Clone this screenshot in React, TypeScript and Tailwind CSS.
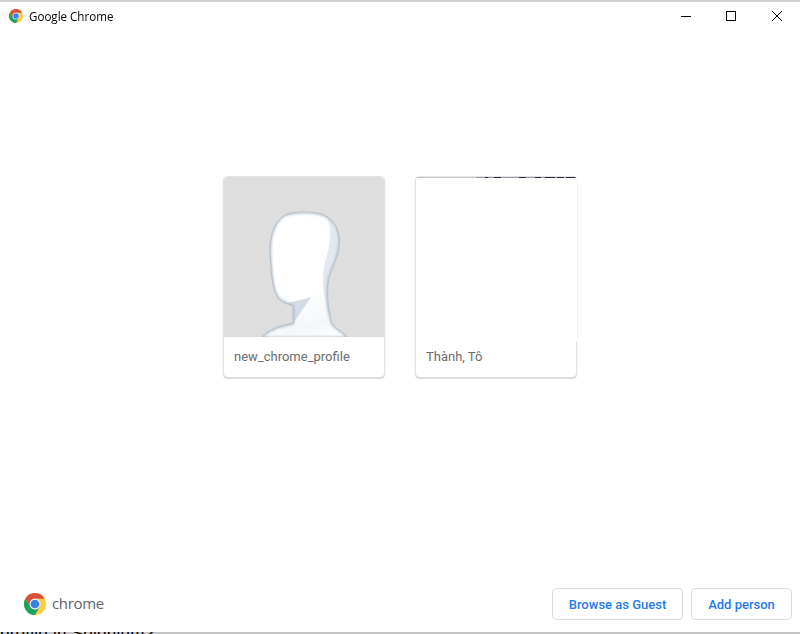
function ChromeLogo({ className }: { className: string }) {
  return (
    <svg viewBox="0 0 48 48" className={className}>
      <circle cx="24" cy="24" r="24" fill="#ffcd40" />
      <path d="M44.8 12A24 24 0 0 0 3.2 12L13.6 30 24 12.5H45Z" fill="#db5038" />
      <path d="M3.2 12A24 24 0 0 0 24 48L34.4 30 24 34 13.6 30Z" fill="#1da160" />
      <circle cx="24" cy="24" r="12" fill="#f1f3f6" />
      <circle cx="24" cy="24" r="9.5" fill="#3b82e8" />
    </svg>
  );
}

const OUTLINE =
  "M37 161C44 152 56 149 69 146V129C64 127 58 126 54 121C48 113 47 94 46 78C45 60 50 43 62 37.5C71 34 90 34 99 37.5C111 43 116 54 115.5 66C115 81 106 93 104 106C103 119 104 133 108 146C111 152 119 154 124 161Z";

function Avatar() {
  return (
    <svg viewBox="0 0 160 160" className="block h-[160px] w-[160px]">
      <defs>
        <radialGradient id="skin" gradientUnits="userSpaceOnUse" cx="70" cy="80" r="85">
          <stop offset="0.4" stopColor="#ffffff" />
          <stop offset="0.85" stopColor="#f4f7fa" />
          <stop offset="1" stopColor="#fbfcfd" />
        </radialGradient>
        <filter id="soft"><feGaussianBlur stdDeviation="1" /></filter>
        <clipPath id="head"><path d={OUTLINE} /></clipPath>
      </defs>
      <rect width="160" height="160" fill="#dedede" />
      <g clipPath="url(#head)">
        <rect width="160" height="160" fill="url(#skin)" />
        <path d="M102 36C108 52 107 65 103 78C98 93 98 108 101 122L104 136 125 100V36Z" fill="#e4e9ef" />
        <path d="M50 126C62 127 74 124 87 120L69 147 60 147V128Z" fill="#d4dce5" />
        <path d={OUTLINE} fill="none" stroke="#bcc8d2" strokeWidth="3" filter="url(#soft)" />
      </g>
      <path d={OUTLINE} fill="none" stroke="#b7c1ca" strokeWidth="1" />
    </svg>
  );
}

export default function App() {
  return (
    <div className="relative flex h-[634px] w-[800px] flex-col overflow-hidden bg-white font-['Roboto',sans-serif]">
      <header className="flex h-8 shrink-0 items-center border-t-2 border-[#cdd1d4] pl-[9px]">
        <ChromeLogo className="mb-[2px] h-[14px] w-[14px]" />
        <span className="ml-[6px] origin-left scale-x-[0.965] whitespace-nowrap font-['Open_Sans',sans-serif] text-[12px] leading-4 text-black">Google Chrome</span>
        <svg viewBox="0 0 110 16" className="ml-auto mr-[14px] h-4 w-[110px] shrink-0" fill="none" stroke="#000" shapeRendering="crispEdges">
          <path d="M5 7.5H15" />
          <path d="M50.5 2.5H59.5V11.5H50.5Z" />
          <path d="m96 2 10 10m0-10L96 12" shapeRendering="auto" />
        </svg>
      </header>
      <main className="flex flex-1 justify-center gap-8 pt-[145px]">
        <section className="h-[200px] w-[160px] rounded-[4px] bg-white shadow-[0_0_1px_1px_#dfe3e5,0_1px_2px_#80878d]">
          <div className="overflow-hidden rounded-t-[4px]">
            <Avatar />
          </div>
          <p className="px-[10px] pt-[10px] text-[13px] leading-5 text-[#6b6d70]">new_chrome_profile</p>
        </section>
        <section className="h-[200px] w-[160px] rounded-[4px] bg-white shadow-[0_0_1px_1px_#dfe3e5,0_1px_2px_#80878d]">
          <svg viewBox="0 0 160 1" className="block h-px w-[160px]" shapeRendering="crispEdges">
            <path d="M0 .5H60" stroke="#c4c7ca" />
            <path d="M60 .5H160" stroke="#9b959f" />
            <path d="M69 .5h3M78 .5h7M103 .5h7M119 .5h6M129 .5h10M141 .5h7M150 .5h9" stroke="#2b2430" />
          </svg>
          <div className="h-[164px] w-[162px] border-r border-[#f1f2f3] bg-white" />
          <p className="-mt-[5px] px-[10px] pt-[10px] text-[13px] leading-5 text-[#6b6d70]">Thành, Tô</p>
        </section>
      </main>
      <footer className="flex h-[46px] shrink-0 items-start justify-between pl-6 pr-2">
        <div className="flex h-8 items-center gap-[6px]">
          <ChromeLogo className="h-[22px] w-[22px]" />
          <span className="mb-[2px] font-['Open_Sans',sans-serif] text-[15px] font-medium leading-5 tracking-[-0.35px] text-[#5f6368]">chrome</span>
        </div>
        <div className="flex gap-2">
          <button className="h-8 w-[131px] rounded border border-[#dadce0] pt-px text-[13px] font-medium text-[#1f7aeb]">Browse as Guest</button>
          <button className="h-8 w-[101px] rounded border border-[#dadce0] pt-px text-[13px] font-medium text-[#1f7aeb]">Add person</button>
        </div>
      </footer>
      <div className="absolute bottom-0 left-0 h-[2px] w-full overflow-hidden bg-[#c5c5c5]">
        <span className="absolute left-0 top-[-6px] whitespace-nowrap font-['Liberation_Sans',sans-serif] text-[17px] leading-4 tracking-[0.25px] text-black">profile in Selenium?</span>
      </div>
    </div>
  );
}
